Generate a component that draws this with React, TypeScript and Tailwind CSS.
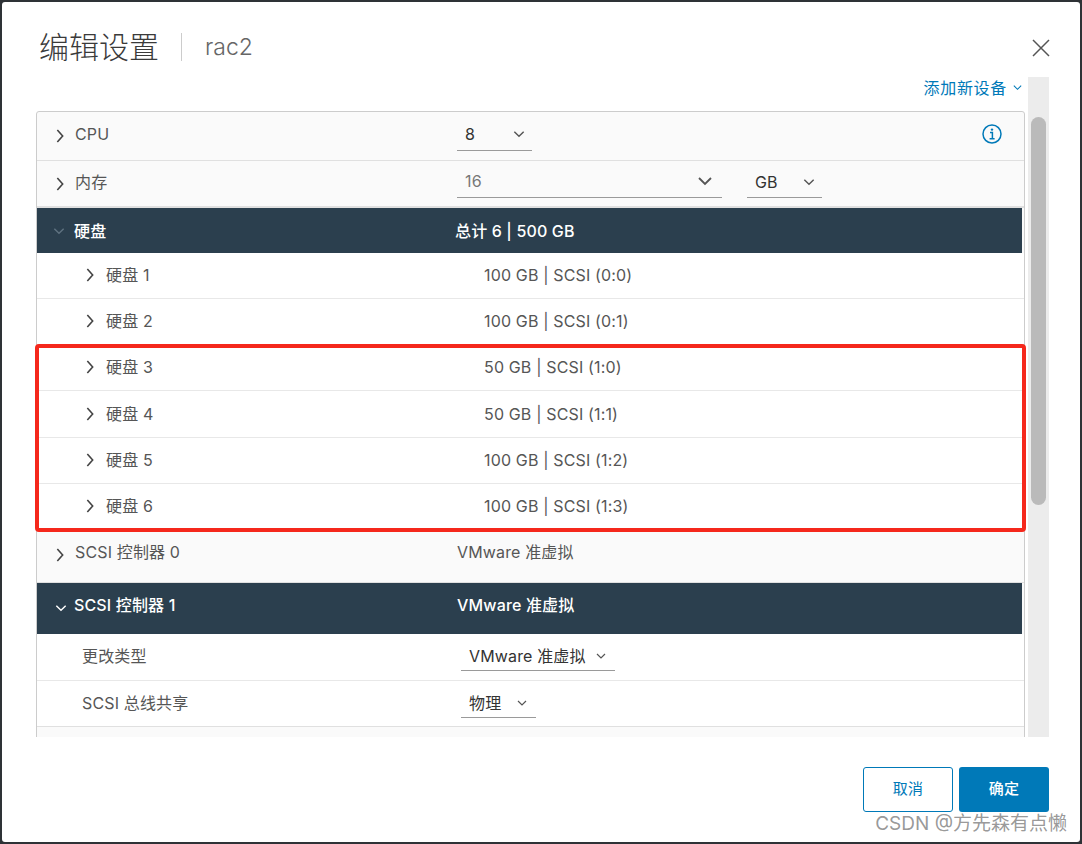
const FONT = "font-['Inter','Noto_Sans_CJK_SC',sans-serif]";

function Chevron({ open, className }: { open?: boolean; className: string }) {
  return (
    <svg viewBox="0 0 12 12" fill="none" stroke="currentColor" strokeWidth="1.2" className={className}>
      {open ? <path d="M2 4l4 4 4-4" /> : <path d="M4 1.5l4 4.5-4 4.5" />}
    </svg>
  );
}

function Select({ value, width, chevronClass = "w-3.5 h-3.5", pr = "pr-[6px]", pb = "pb-[4px]", muted }: { value: string; width: string; chevronClass?: string; pr?: string; pb?: string; muted?: boolean }) {
  return (
    <div className={`flex items-center justify-between h-[29px] pl-[8px] border-b border-[#9a9a9a] text-[16px] ${pb} ${pr} ${width} ${muted ? "text-[#777]" : "text-[#333]"}`}>
      <span>{value}</span>
      <Chevron open className={`${chevronClass} text-[#555]`} />
    </div>
  );
}

function DiskRow({ name, detail }: { name: string; detail: string }) {
  return (
    <div className="flex items-center h-[46.17px] pb-[1px] border-b border-[#e8e8e8] bg-white text-[16px] text-[#565656]">
      <div className="flex items-center w-[447px] pl-[45px] shrink-0">
        <Chevron className="w-[16px] h-[16px] text-[#444] mr-[8px]" />
        <span>{name}</span>
      </div>
      <span>{detail}</span>
    </div>
  );
}

function DarkRow({ name, detail, rowClass, iconClass, labelWidth }: { name: string; detail: string; rowClass: string; iconClass: string; labelWidth: string }) {
  return (
    <div className={`flex items-center mr-[2px] bg-[#2b3f4e] text-white font-medium text-[16px] ${rowClass}`}>
      <div className={`flex items-center shrink-0 pl-[15px] ${labelWidth}`}>
        <Chevron open className={`w-[14px] h-[14px] mr-[8px] ${iconClass}`} />
        <span>{name}</span>
      </div>
      <span>{detail}</span>
    </div>
  );
}

export default function App() {
  const disks = [
    ["硬盘 1", "100 GB | SCSI (0:0)"],
    ["硬盘 2", "100 GB | SCSI (0:1)"],
    ["硬盘 3", "50 GB | SCSI (1:0)"],
    ["硬盘 4", "50 GB | SCSI (1:1)"],
    ["硬盘 5", "100 GB | SCSI (1:2)"],
    ["硬盘 6", "100 GB | SCSI (1:3)"],
  ];

  return (
    <div className={`h-[844px] w-[1082px] bg-[#2e3236] p-[2px] tracking-[0.15px] ${FONT}`}>
      <div className="relative flex flex-col h-full bg-white rounded-[3px]">
        <div className="flex items-start justify-between h-[75px] pl-[37px] pr-[30px] shrink-0">
          <div className="flex items-center mt-[28px]">
            <span className="text-[30px] leading-[32px] font-light tracking-normal text-[#3a3a3a]">编辑设置</span>
            <span className="w-px h-[28px] bg-[#ccc] ml-[22px] mr-[23px]" />
            <span className="text-[23px] font-light tracking-normal text-[#666]">rac2</span>
          </div>
          <svg viewBox="0 0 18 18" fill="none" stroke="#555" strokeWidth="1.5" className="w-[18px] h-[18px] mt-[37px]">
            <path d="M1 1l16 16M17 1L1 17" />
          </svg>
        </div>

        <div className="flex h-[660px] pl-[34px] pr-[31px] shrink-0">
          <div className="flex-1 overflow-hidden">
            <div className="flex items-start justify-end h-[34px] pr-[2px] gap-[5px] text-[16px] leading-[22px] tracking-[0.7px] text-[#0079b8]">
              <span>添加新设备</span>
              <Chevron open className="w-[11px] h-[11px] mt-[5px]" />
            </div>
            <div className="border border-[#ccc] rounded-t-[3px] bg-[#fafafa] text-[16px] text-[#565656]">
              <div className="flex items-center h-[49px] border-b border-[#e0e0e0] pr-[22px]">
                <div className="flex items-center w-[420px] pl-[15px] shrink-0">
                  <Chevron className="w-[16px] h-[16px] text-[#444] mr-[7px]" />
                  <span className="-mt-[5px]">CPU</span>
                </div>
                <Select value="8" width="w-[75px]" />
                <svg viewBox="0 0 20 20" fill="none" className="w-[20px] h-[20px] ml-auto -mt-[5px] text-[#0079b8]">
                  <circle cx="10" cy="10" r="9" stroke="currentColor" strokeWidth="1.5" />
                  <circle cx="10" cy="5.6" r="1.2" fill="currentColor" />
                  <path d="M8 8.6h2.4v6M7.6 14.8h5" stroke="currentColor" strokeWidth="1.5" />
                </svg>
              </div>
              <div className="flex items-center h-[47px] border-b-2 border-[#e0e0e0]">
                <div className="flex items-center w-[420px] pl-[15px] shrink-0">
                  <Chevron className="w-[16px] h-[16px] text-[#444] mr-[7px]" />
                  <span className="-mt-[3px]">内存</span>
                </div>
                <Select value="16" width="w-[265px]" chevronClass="w-[18px] h-[18px]" pr="pr-[8px]" muted />
                <div className="ml-[25px]">
                  <Select value="GB" width="w-[75px]" chevronClass="w-[14px] h-[14px]" pb="pb-[3px]" />
                </div>
              </div>

              <DarkRow name="硬盘" detail="总计 6 | 500 GB" rowClass="h-[45px]" iconClass="text-[#5f7280]" labelWidth="w-[418px]" />
              {disks.map(([name, detail]) => (
                <DiskRow key={name} name={name} detail={detail} />
              ))}

              <div className="flex items-start h-[53px] pt-[10px] border-b border-[#e0e0e0]">
                <div className="flex items-center w-[420px] pl-[15px] shrink-0">
                  <Chevron className="w-[16px] h-[16px] translate-y-[3px] text-[#444] mr-[7px]" />
                  <span>SCSI 控制器 0</span>
                </div>
                <span>VMware 准虚拟</span>
              </div>
              <DarkRow name="SCSI 控制器 1" detail="VMware 准虚拟" rowClass="h-[51px] pb-[6px]" iconClass="translate-x-[2px] translate-y-[3px] text-white" labelWidth="w-[420px]" />
              <div className="flex items-center h-[47px] pb-[2px] pr-[2px] bg-white border-b border-[#e8e8e8]">
                <span className="w-[424px] pl-[45px] shrink-0">更改类型</span>
                <div className="translate-y-[1px]">
                  <Select value="VMware 准虚拟" width="w-[154px]" chevronClass="w-3 h-3" pr="pr-[8px]" pb="pb-[1px]" />
                </div>
              </div>
              <div className="flex items-center h-[46px] bg-white border-b border-[#e0e0e0]">
                <span className="w-[424px] pl-[45px] shrink-0">SCSI 总线共享</span>
                <Select value="物理" width="w-[75px]" chevronClass="w-3 h-3" pr="pr-[8px]" pb="pb-[0px]" />
              </div>
              <div className="h-[40px]" />
            </div>
          </div>
          <div className="w-[21px] ml-[3px] bg-[#ececec] pt-[40px] pl-[3px] shrink-0">
            <div className="w-[15px] h-[388px] rounded-full bg-[#bababa]" />
          </div>
        </div>

        <div className="flex justify-end gap-[6px] pt-[30px] pr-[31px]">
          <button className="w-[90px] h-[45px] border border-[#0079b8] rounded-[3px] bg-white text-[15px] text-[#0079b8]">取消</button>
          <button className="w-[90px] h-[45px] rounded-[3px] bg-[#0079b8] text-[15px] font-medium text-white">确定</button>
        </div>

        {/* annotation + watermark sit on top of the screenshot */}
        <div className="absolute left-[33px] top-[342px] w-[991px] h-[188px] border-[4px] border-[#f5281c] rounded-[4px]" />
        <span className="absolute right-[13px] bottom-[4px] text-[19px] tracking-normal text-[#8c8c8c]/90">CSDN @方先森有点懒</span>
      </div>
    </div>
  );
}
